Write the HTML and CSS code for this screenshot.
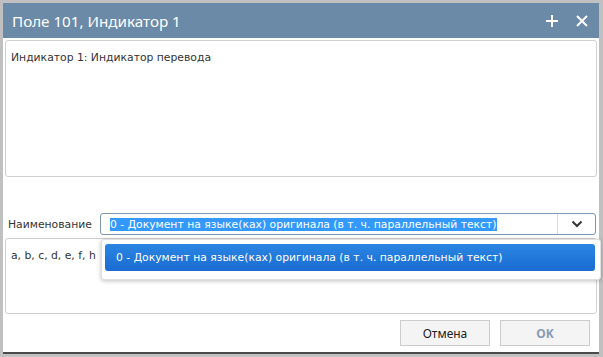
FILE: index.html
```html
<!DOCTYPE html>
<html>
<head>
<meta charset="utf-8">
<link rel="stylesheet" href="styles.css">
</head>
<body>
<div class="dialog">
  <div class="titlebar">
    <span class="title">Поле 101, Индикатор 1</span>
    <div class="tools">
      <svg class="ic" width="14" height="14" viewBox="0 0 14 14"><path d="M7 1v12M1 7h12" stroke="#fff" stroke-width="2"/></svg>
      <svg class="ic" width="14" height="14" viewBox="0 0 14 14"><path d="M2 2l10 10M12 2L2 12" stroke="#fff" stroke-width="2"/></svg>
    </div>
  </div>
  <div class="body">
    <div class="area area1">Индикатор 1: Индикатор перевода</div>
    <div class="row">
      <span class="label">Наименование</span>
      <div class="select">
        <span class="sel-text"><span class="hl">0 - Документ на языке(ках) оригинала (в т. ч. параллельный текст)</span></span>
        <span class="arrow"><svg width="12" height="8" viewBox="0 0 12 8"><path d="M1.5 1.5L6 6l4.5-4.5" fill="none" stroke="#333" stroke-width="2"/></svg></span>
      </div>
    </div>
    <div class="area area2">a, b, c, d, e, f, h</div>
    <div class="dropdown">
      <div class="item">0 - Документ на языке(ках) оригинала (в т. ч. параллельный текст)</div>
    </div>
  </div>
  <div class="footer">
    <button class="btn">Отмена</button>
    <button class="btn ok">OK</button>
  </div>
</div>
</body>
</html>
```
FILE: styles.css
```css
html, body { margin: 0; padding: 0; }
body {
  width: 603px; height: 357px; overflow: hidden;
  background: #c0c0c0;
  font-family: "DejaVu Sans", sans-serif;
  padding: 3px 4px 0 3px;
  box-sizing: border-box;
}
.dialog {
  background: #fff;
  height: 349px;
  border-bottom: 2px solid #4a4a4a;
  position: relative;
  display: flex; flex-direction: column;
}
.titlebar {
  height: 35px;
  background: #6a8aa8;
  display: flex; align-items: center; justify-content: space-between;
  padding: 0 10px 0 9px;
}
.title { color: #fff; font-size: 15.2px; font-family: "Noto Sans", "DejaVu Sans", sans-serif; }
.tools { display: flex; gap: 16px; align-items: center; }
.ic { display: block; }
.body { position: relative; padding: 2px 2px 0 2px; flex: 1; }
.area {
  border: 1px solid #d0d0d0; border-radius: 3px;
  font-size: 10.8px; color: #333;
  padding: 10px 5px 7px;
}
.area1 { height: 118px; }
.row { display: flex; align-items: center; height: 22px; margin-top: 36px; }
.label { font-size: 10.8px; color: #333; width: 92px; padding-left: 3px; }
.select {
  flex: 1; height: 20px; border: 1px solid #7d97b3; border-radius: 3px;
  display: flex; align-items: center; margin-right: 1px;
}
.sel-text { flex: 1; padding-left: 9px; font-size: 10.8px; white-space: nowrap; overflow: hidden; }
.hl { background: #3399ff; color: #fff; padding: 1px 0; }
.arrow { width: 37px; height: 100%; border-left: 1px solid #dcdcdc; display: flex; align-items: center; justify-content: center; }
.area2 { height: 57px; margin-top: 3px; padding-top: 10px; }
.dropdown {
  position: absolute; left: 98px; top: 201px; width: 490px;
  background: #fff; border: 1px solid #e0e0e0; border-radius: 3px;
  box-shadow: 0 1px 4px rgba(0,0,0,0.25);
  padding: 4px 5px 8px 3px;
}
.item {
  background: linear-gradient(#2a86e2, #1b6bd2);
  color: #fff; font-size: 10.8px; border-radius: 3px;
  height: 27px; line-height: 27px; padding-left: 11px;
}
.footer { display: flex; justify-content: flex-end; gap: 10px; padding: 0 9px 5px 0; height: 32px; align-items: flex-start; box-sizing: border-box; }
.btn {
  width: 90px; height: 26px; background: #f4f4f4; border: 1px solid #cccccc;
  font-family: "Noto Sans", "DejaVu Sans", sans-serif; font-size: 12px; color: #222;
}
.ok { color: #8a9cb2; font-weight: bold; }
```
